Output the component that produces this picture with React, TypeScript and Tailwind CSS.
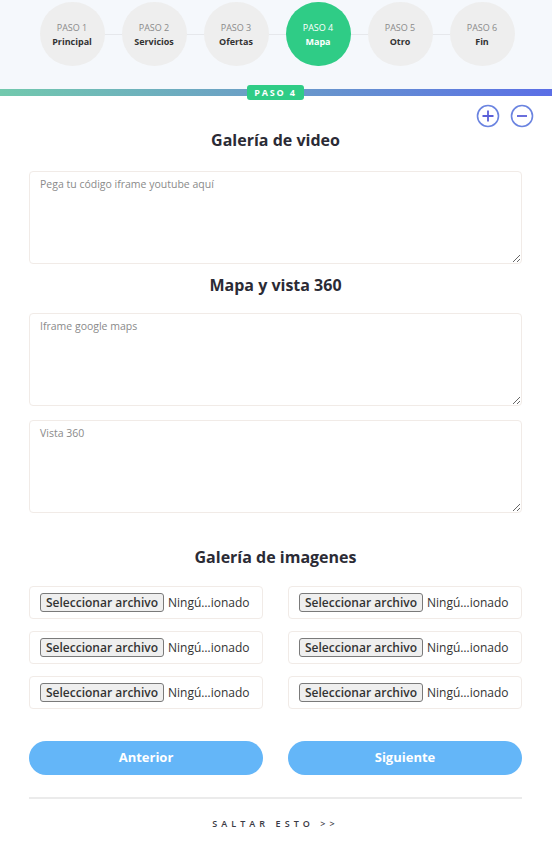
import React from "react";

const steps = [
    { n: 1, label: "Principal" },
    { n: 2, label: "Servicios" },
    { n: 3, label: "Ofertas" },
    { n: 4, label: "Mapa", active: true },
    { n: 5, label: "Otro" },
    { n: 6, label: "Fin" },
];

const font = { fontFamily: "'Open Sans', Lato, sans-serif" };

const FileRow = () => (
    <div className="h-[33px] border border-[#f1ebe7] rounded-sm flex items-center pl-[10px] gap-[4px]">
        <span className="h-[19px] px-[5px] border border-[#7a7a7a] rounded-[3px] bg-[#efefef] text-[12px] font-semibold text-[#333] flex items-center leading-none">
            Seleccionar archivo
        </span>
        <span className="text-[12px] text-[#333]">Ningú…ionado</span>
    </div>
);

export default function App() {
    return (
        <div className="w-[552px] min-h-[851px] bg-white" style={font}>
            {/* steps header */}
            <div className="h-[89px] bg-[#f5f8fc] pt-[2px] relative">
                <div className="absolute left-[90px] right-[90px] top-[34px] h-px bg-[#e6e8ec]" />
                <div className="relative flex justify-center gap-[17px] pl-[2px]">
                    {steps.map((s) => (
                        <div
                            key={s.n}
                            className={
                                "w-[65px] h-[64px] rounded-full flex flex-col items-center justify-center gap-[3px] " +
                                (s.active ? "bg-[#2fcc86] text-white" : "bg-[#eeeeee] text-[#333]")
                            }
                        >
                            <span className={"text-[9px] leading-[11px] " + (s.active ? "text-white" : "text-[#8a8a8a]")}>
                                PASO {s.n}
                            </span>
                            <span className="text-[9px] leading-[11px] font-bold">{s.label}</span>
                        </div>
                    ))}
                </div>
            </div>

            {/* progress bar */}
            <div className="relative h-[7px] bg-gradient-to-r from-[#72c9ad] via-[#6b9bc8] to-[#5b6ee6]">
                <div className="absolute left-[247px] top-[-4px] w-[57px] h-[15px] rounded-[3px] bg-[#2fcc86] text-white text-[9px] font-bold tracking-[0.2em] flex items-center justify-center">
                    PASO 4
                </div>
            </div>

            <div className="px-[29px] pr-[30px]">
                <div className="flex justify-end gap-[10px] pt-[8px] mr-[-12px]">
                    <svg width="24" height="24" viewBox="0 0 24 24" fill="none">
                        <circle cx="12" cy="12" r="10.5" stroke="#6b84e0" strokeWidth="1.6" />
                        <path d="M12 6.5v11M6.5 12h11" stroke="#5a5fd8" strokeWidth="1.8" />
                    </svg>
                    <svg width="24" height="24" viewBox="0 0 24 24" fill="none">
                        <circle cx="12" cy="12" r="10.5" stroke="#6b84e0" strokeWidth="1.6" />
                        <path d="M7 12h10" stroke="#5a5fd8" strokeWidth="1.8" />
                    </svg>
                </div>

                <h2 className="text-center text-[16px] font-bold text-[#2b2b35] mt-[2px] leading-[20px]">
                    Galería de video
                </h2>
                <textarea
                    className="mt-[21px] block w-full h-[93px] border border-[#f1ebe7] rounded-sm px-[10px] py-[5px] text-[10.5px] placeholder:text-[#8a8a8a] outline-none"
                    placeholder="Pega tu código iframe youtube aquí"
                />

                <h2 className="text-center text-[16px] font-bold text-[#2b2b35] mt-[11px] leading-[20px]">
                    Mapa y vista 360
                </h2>
                <textarea
                    className="mt-[18px] block w-full h-[93px] border border-[#f1ebe7] rounded-sm px-[10px] py-[5px] text-[10.5px] placeholder:text-[#8a8a8a] outline-none"
                    placeholder="Iframe google maps"
                />
                <textarea
                    className="mt-[14px] block w-full h-[93px] border border-[#f1ebe7] rounded-sm px-[10px] py-[5px] text-[10.5px] placeholder:text-[#8a8a8a] outline-none"
                    placeholder="Vista 360"
                />

                <h2 className="text-center text-[16px] font-bold text-[#2b2b35] mt-[34px] leading-[20px]">
                    Galería de imagenes
                </h2>
                <div className="mt-[19px] grid grid-cols-2 gap-x-[25px] gap-y-[12px]">
                    <FileRow />
                    <FileRow />
                    <FileRow />
                    <FileRow />
                    <FileRow />
                    <FileRow />
                </div>

                <div className="mt-[32px] grid grid-cols-2 gap-x-[25px]">
                    <button className="h-[34px] rounded-full bg-[#64b6f8] text-white text-[13px] font-bold">
                        Anterior
                    </button>
                    <button className="h-[34px] rounded-full bg-[#64b6f8] text-white text-[13px] font-bold">
                        Siguiente
                    </button>
                </div>

                <div className="mt-[22px] h-[2px] bg-[#ebebeb]" />
                <div className="mt-[18px] text-center text-[9px] tracking-[0.45em] text-[#3a3a44] font-semibold">
                    SALTAR ESTO &gt;&gt;
                </div>
            </div>
        </div>
    );
}
